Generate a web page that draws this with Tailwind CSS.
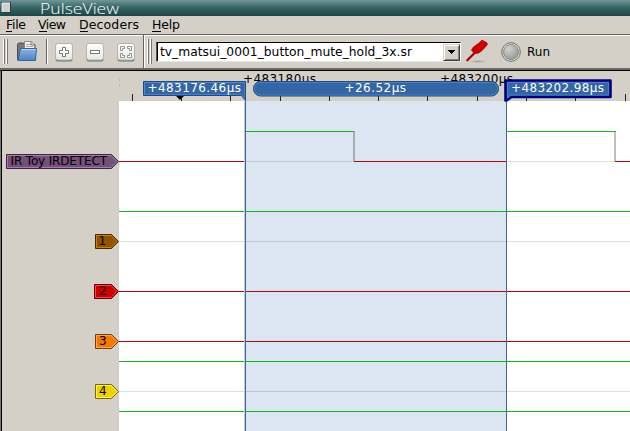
<!DOCTYPE html>
<html lang="en">
<head>
<meta charset="utf-8">
<title>PulseView</title>
<script src="https://cdn.jsdelivr.net/npm/@tailwindcss/browser@4"></script>
</head>
<body class="w-[630px] h-[431px] overflow-hidden bg-[#d4d0c8] flex flex-col text-black font-['DejaVu_Sans',sans-serif] text-[12.5px]">
<header class="h-[16px] shrink-0 flex items-center bg-linear-to-b from-[#6f9796] via-[#346263] to-[#204546]">
  <svg class="w-[630px] h-[16px] overflow-visible" viewBox="0 0 630 16">
    <rect x="1.5" y="2.5" width="9" height="10" fill="#d0d0d0" stroke="#263f40"/><path d="M2 12V3h8" fill="none" stroke="#f4f4f4"/>
    <text x="40" y="13.5" font-family="Open Sans, sans-serif" font-weight="300" font-size="14.5" textLength="79" lengthAdjust="spacingAndGlyphs" fill="#fff">PulseView</text>
  </svg>
</header>
<nav class="h-[18px] shrink-0">
  <svg class="w-[630px] h-[18px]" viewBox="0 0 630 18" font-size="12.5">
    <text x="6" y="13" textLength="20">File</text><text x="38" y="13" textLength="28">View</text><text x="79" y="13" textLength="60">Decoders</text><text x="152" y="13" textLength="28">Help</text>
    <path d="M6 15.500h6M39 15.500h8M80 15.500h8M152 15.500h9" stroke="#000"/>
  </svg>
</nav>
<div class="h-[37px] shrink-0 flex border-t border-[#666] relative">
  <svg class="w-[156px] h-[36px]" viewBox="0 35 156 36">
    <defs>
      <linearGradient id="f" x2="0" y2="1"><stop stop-color="#8db4e0"/><stop offset="1" stop-color="#4c82c2"/></linearGradient>
      <linearGradient id="b" x2="0" y2="1"><stop stop-color="#fff"/><stop offset="1" stop-color="#e6e6e4"/></linearGradient>
      <g id="btn"><rect x=".5" y="1.500" width="17" height="17" rx="2.500" fill="#77756f"/><rect x=".5" y=".5" width="17" height="16.500" rx="2.500" fill="url(#b)" stroke="#b5b3ad"/></g>
      <g id="grip"><path d="M.5 0v25M3.500 0v25" stroke="#fff"/><path d="M1.500 0v25M4.500 0v25" stroke="#77756f"/></g>
    </defs>
    <path d="M0 35.500h156" stroke="#fff"/>
    <use href="#grip" x="3" y="39"/><use href="#grip" x="147" y="39"/>
    <path d="M46.500 39v25" stroke="#66645f"/><path d="M47.500 39v25" stroke="#fff"/>
    <path d="M143.500 35v33" stroke="#66645f"/><path d="M144.500 35v33" stroke="#fff"/>
    <path d="M17.500 60V44.500l1-1.500h5l1 1.500h10.500V60z" fill="#777" stroke="#4d4d4d"/>
    <path d="M24.500 50v-8.500h7l3 3.500v5z" fill="#f3f3f2" stroke="#888"/><path d="M26 44.500h5M26 46.500h7" stroke="#aaa"/><path d="M31 42v3h3" fill="none" stroke="#777"/>
    <path d="M20.500 48.500h16l-1 12h-17.500z" fill="url(#f)" stroke="#3465a4"/>
    <path d="M21.500 49.500h14" stroke="#b6d0ed"/>
    <use href="#btn" x="55" y="43"/><use href="#btn" x="86" y="43"/><use href="#btn" x="117" y="43"/>
    <path d="M62.500 47.500h3v3h3v3h-3v3h-3v-3h-3v-3h3z" fill="#fff" stroke="#777"/>
    <rect x="90.500" y="50.500" width="9" height="3" fill="#fff" stroke="#777"/>
    <path d="M120.500 46.500h4v2h-2v2h-2zM127.500 46.500h4v4h-2v-2h-2zM120.500 53.500h2v2h2v2h-4zM129.500 53.500h2v4h-4v-2h2z" fill="#fff" stroke="#888" stroke-width=".9"/>
  </svg>
  <div class="flex-1 border-t border-white flex">
    <div class="mt-[6px] w-[305px] h-[20px] bg-white border border-t-black border-l-[#555] border-r-white border-b-[#e8e6e0] flex items-center justify-between shadow-[inset_1px_0_0_#000]">
      <svg class="w-[286px] h-[18px]" viewBox="0 0 286 18"><text x="3" y="13" font-size="12.500" textLength="252" lengthAdjust="spacingAndGlyphs">tv_matsui_0001_button_mute_hold_3x.sr</text></svg>
      <div class="w-[17px] h-[17px] bg-[#d4d0c8] border border-t-[#d4d0c8] border-l-[#d4d0c8] border-r-[#404040] border-b-[#404040] shadow-[inset_1px_1px_0_#fff,inset_-1px_-1px_0_#808080] flex items-center justify-center"><svg class="w-[7px] h-[4px]" viewBox="0 0 7 4" shape-rendering="crispEdges"><path d="M0 0h7L3.500 4z"/></svg></div>
    </div>
    <svg class="w-[169px] h-[34px]" viewBox="461 36 169 34">
      <defs><radialGradient id="k" cx=".35" cy=".3" r=".8"><stop stop-color="#d1d3cf"/><stop offset="1" stop-color="#92958f"/></radialGradient><radialGradient id="s"><stop stop-color="#8d8a84" stop-opacity=".7"/><stop offset="1" stop-color="#8d8a84" stop-opacity="0"/></radialGradient></defs>
      <ellipse cx="478" cy="61.500" rx="10" ry="1.500" fill="url(#s)"/>
      <path d="M467.300 60.300l8-8" stroke="#a40000" stroke-width="2.200" stroke-linecap="round"/><path d="M474.500 53.500l-3.200-3.200 2-3.300 5-3.500 3.700-3.500 1.500.8 1.500 1 1.800.7.700 2-3 3.500-4 4-3 1.500z" fill="#cc0000" stroke="#a40000" stroke-width=".6"/>
      <circle cx="511" cy="52" r="9.300" fill="#dededb" stroke="#6c6f6a"/><circle cx="511" cy="52" r="7.500" fill="url(#k)" stroke="#8b8e88"/>
      <text x="527" y="56" font-size="12.500" textLength="23" lengthAdjust="spacingAndGlyphs">Run</text>
    </svg>
  </div>
  <div class="absolute left-0 right-0 bottom-[1px] h-[2px] bg-[#6a6863]"></div>
  <div class="absolute left-0 right-0 bottom-0 h-[1px] bg-black"></div>
</div>
<main class="h-[360px] shrink-0">
  <svg class="w-[630px] h-[360px]" viewBox="0 71 630 360" font-size="12">
    <path d="M0 71h1v360H0z" fill="#777"/><path d="M1 71h1v360H1z"/>
    <!-- time ruler -->
    <text x="243" y="83" textLength="73">+483180µs</text><text x="440" y="83" textLength="73">+483200µs</text>
    <path d="M132.500 94v7M181.500 94v7M230.500 94v7M280.500 94v7M329.500 94v7M378.500 94v7M427.500 94v7M477.500 94v7M526.500 94v7M575.500 94v7M625.500 94v7" stroke="#222"/>
    <path d="M175 95h10l-5 5z"/>
    <path d="M119.500 79v2M119.500 84v2" stroke="#9bc5b4"/>
    <!-- trace canvas -->
    <path d="M119 101h511v330H119z" fill="#fff"/>
    <path d="M245 101h261v330H245z" fill="#dce6f2"/>
    <g shape-rendering="crispEdges" fill="none">
      <path d="M119 241.500h511M119 391.500h511" stroke="#000" stroke-opacity=".13"/>
      <path d="M245 161.500h109M507 161.500h109" stroke="#000" stroke-opacity=".13"/>
      <path d="M353 131h2v30h-2zM614 131h2v30h-2z" fill="#000" fill-opacity=".25"/>
      <path d="M119 211.500h511M119 361.500h511M119 411.500h511M245 131.500h109M507 131.500h109" stroke="#0fb814"/>
      <path d="M119 161.500h126M354 161.500h153M615 161.500h15M119 291.500h511M119 341.500h511" stroke="#a9080b"/>
      <path d="M244.500 101v330" stroke="#bccbdf"/><path d="M245.500 101v330M506.500 101v330" stroke="#426596"/>
    </g>
    <!-- cursor labels -->
    <path d="M143.500 81.500h102v19l-4-5h-98z" fill="#3465a4" stroke="#204a87"/><path d="M144.500 94.500v-12h100" fill="none" stroke="#598ac8"/><path d="M144.500 94.500h97l3 3.500V82.500" fill="none" stroke="#4f80bd"/>
    <rect x="253.500" y="81.500" width="245" height="14.500" rx="7" fill="#3465a4" stroke="#204a87"/><rect x="254.500" y="82.500" width="243" height="12.500" rx="6" fill="none" stroke="#4d80bf"/>
    <path d="M505.500 80.500h105v16.500h-99l-5 3.500h-1z" fill="#3465a4" stroke="#00007f" stroke-width="2.600" stroke-linejoin="round"/><path d="M507.500 95.500v-13h101v12.500h-97.500l-3.500 3z" fill="none" stroke="#4d80bf"/>
    <g fill="#fff"><text x="147.500" y="92" textLength="93.500">+483176.46µs</text><text x="344.500" y="92" textLength="61.500">+26.52µs</text><text x="511" y="92" textLength="93">+483202.98µs</text></g>
    <!-- channel tags -->
    <g stroke-linejoin="miter">
      <path d="M6.500 154.500h105l7 7-7 7H6.500z" fill="#75507b" stroke="#3a283d"/><path d="M7.500 155.500h103.500l6 6-6 6H7.500z" fill="none" stroke="#a77cad"/>
      <path d="M95.500 234.500h16l7 7-7 7h-16z" fill="#8f5202" stroke="#472900"/><path d="M96.500 235.500h14.500l6 6-6 6H96.500z" fill="none" stroke="#cf7a0b"/>
      <path d="M94.500 284.500h17l7 7-7 7h-17z" fill="#cc0000" stroke="#660000"/><path d="M95.500 285.500h15.500l6 6-6 6H95.500z" fill="none" stroke="#ff4545"/>
      <path d="M95.500 334.500h16l7 7-7 7h-16z" fill="#f57900" stroke="#7a3c00"/><path d="M96.500 335.500h14.500l6 6-6 6H96.500z" fill="none" stroke="#ffa45a"/>
      <path d="M95.500 384.500h16l7 7-7 7h-16z" fill="#edd400" stroke="#766a00"/><path d="M96.500 385.500h14.500l6 6-6 6H96.500z" fill="none" stroke="#fff16b"/>
    </g>
    <text x="10.500" y="165" textLength="96.500">IR Toy IRDETECT</text>
    <text x="98.500" y="245">1</text><text x="99" y="295">2</text><text x="99" y="345">3</text><text x="99" y="395">4</text>
  </svg>
</main>
</body>
</html>
